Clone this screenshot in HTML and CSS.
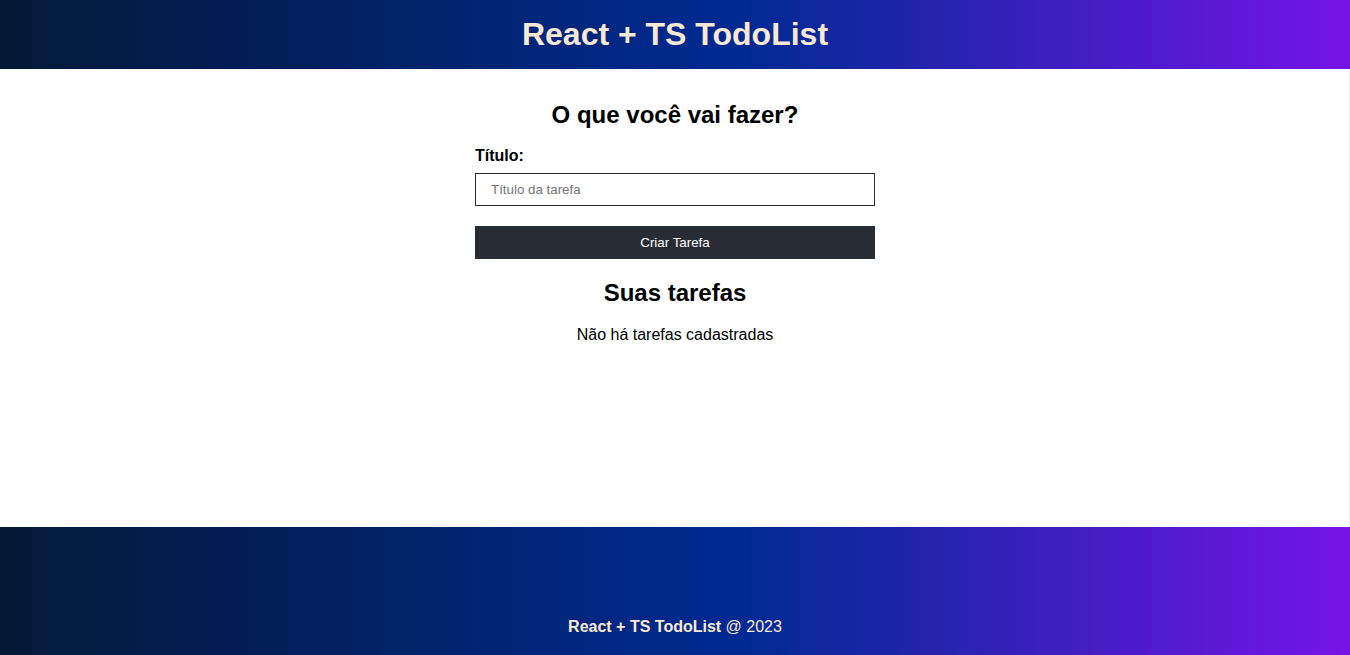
FILE: index.html
```html
<!DOCTYPE html>
<html lang="pt-BR">
<head>
<meta charset="utf-8">
<title>React + TS TodoList</title>
<link rel="stylesheet" href="styles.css">
</head>
<body>
<div class="app">
  <header class="header">
    <h1 class="header-title">React + TS TodoList</h1>
  </header>
  <main class="main">
    <section class="form-section">
      <h2 class="section-title">O que você vai fazer?</h2>
      <form class="task-form">
        <label class="field-label" for="title">Título:</label>
        <input class="field-input" id="title" type="text" placeholder="Título da tarefa">
        <button class="submit-btn" type="button">Criar Tarefa</button>
      </form>
    </section>
    <section class="list-section">
      <h2 class="section-title">Suas tarefas</h2>
      <p class="empty">Não há tarefas cadastradas</p>
    </section>
  </main>
  <footer class="footer">
    <p class="footer-text"><strong>React + TS TodoList</strong> @ 2023</p>
  </footer>
</div>
</body>
</html>
```

FILE: styles.css
```css
* { box-sizing: border-box; }
html, body { margin: 0; padding: 0; }
body {
  font-family: "Liberation Sans", Arial, sans-serif;
  color: #000;
  background: #fff;
}
.app {
  display: flex;
  flex-direction: column;
  width: 100%;
}
.header, .footer {
  background: linear-gradient(to right, #051937 0%, #002a93 55%, #7614e8 100%);
  color: #fbe9d3;
  display: flex;
  align-items: center;
  justify-content: center;
}
.header { height: 69px; }
.header-title {
  margin: 0;
  font-size: 32px;
  font-weight: bold;
}
.main {
  min-height: 458px;
  display: flex;
  flex-direction: column;
  align-items: center;
  padding-top: 32px;
  box-shadow: inset -1px 0 0 #eeeeee;
}
.section-title {
  margin: 0;
  font-size: 24px;
  font-weight: bold;
  text-align: center;
}
.form-section { width: 400px; }
.task-form {
  display: flex;
  flex-direction: column;
  margin-top: 18px;
}
.field-label {
  font-size: 16px;
  font-weight: bold;
  line-height: 18px;
}
.field-input {
  margin-top: 8px;
  height: 33px;
  border: 1px solid #2b2b2b;
  padding: 0 15px;
  font-family: "Liberation Sans", Arial, sans-serif;
  font-size: 13.33px;
  outline: none;
}
.field-input::placeholder { color: #757575; }
.submit-btn {
  margin-top: 20px;
  height: 33px;
  border: none;
  background: #282c34;
  color: #fff;
  font-family: "Liberation Sans", Arial, sans-serif;
  font-size: 13.33px;
  cursor: pointer;
}
.list-section {
  width: 400px;
  margin-top: 20px;
  text-align: center;
}
.empty {
  margin: 19px 0 0;
  font-size: 16px;
}
.footer { height: 200px; }
.footer-text {
  margin: 0;
  font-size: 16px;
}
```
